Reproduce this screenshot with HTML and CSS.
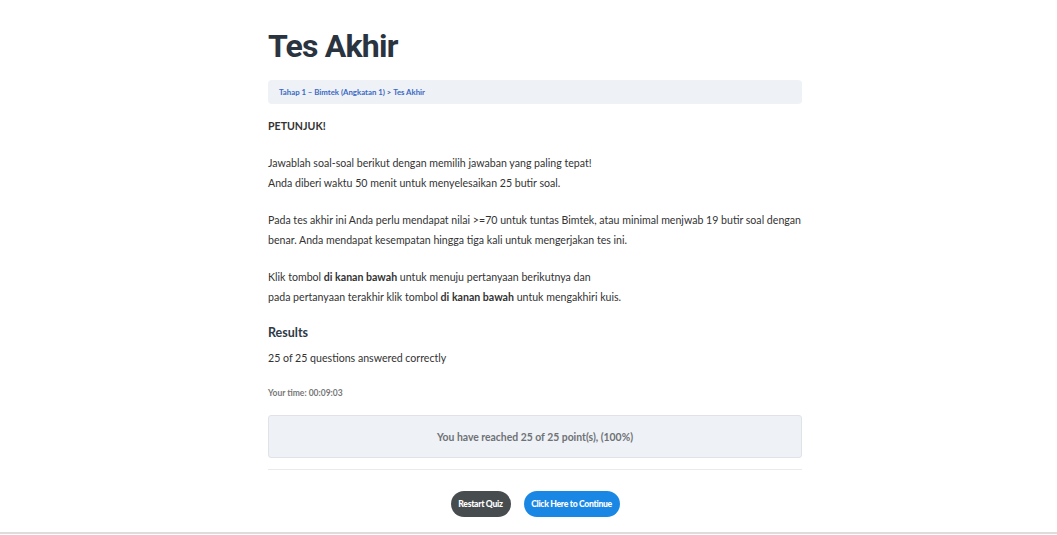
FILE: index.html
```html
<!DOCTYPE html>
<html lang="id">
<head>
<meta charset="utf-8">
<title>Tes Akhir</title>
<link rel="stylesheet" href="styles.css">
</head>
<body>
<div class="page">
  <main class="content">
    <h1 class="title">Tes Akhir</h1>
    <nav class="breadcrumb"><a href="#">Tahap 1 – Bimtek (Angkatan 1)</a> &gt; <a href="#">Tes Akhir</a></nav>
    <p class="strong-line">PETUNJUK!</p>
    <p class="text">Jawablah soal-soal berikut dengan memilih jawaban yang paling tepat!<br>Anda diberi waktu 50 menit untuk menyelesaikan 25 butir soal.</p>
    <p class="text">Pada tes akhir ini Anda perlu mendapat nilai &gt;=70 untuk tuntas Bimtek, atau minimal menjwab 19 butir soal dengan benar. Anda mendapat kesempatan hingga tiga kali untuk mengerjakan tes ini.</p>
    <p class="text">Klik tombol <b>di kanan bawah</b> untuk menuju pertanyaan berikutnya dan<br>pada pertanyaan terakhir klik tombol <b>di kanan bawah</b> untuk mengakhiri kuis.</p>
    <h4 class="results-title">Results</h4>
    <p class="answered">25 of 25 questions answered correctly</p>
    <p class="time">Your time: 00:09:03</p>
    <div class="points">You have reached 25 of 25 point(s), (100%)</div>
    <hr class="divider">
    <div class="actions">
      <button class="btn btn-dark">Restart Quiz</button>
      <button class="btn btn-blue">Click Here to Continue</button>
    </div>
  </main>
</div>
<div class="footer-line"></div>
</body>
</html>
```
FILE: styles.css
```css
html, body {
  margin: 0;
  padding: 0;
  background: #ffffff;
}
body {
  font-family: Lato, "Open Sans", sans-serif;
  color: #333333;
}
.page {
  display: flex;
  padding-left: 13px;
  height: 532px;
}
.content {
  width: 534px;
  margin: 0 auto;
}
.title {
  font-family: Roboto, sans-serif;
  font-weight: 700;
  font-size: 32px;
  letter-spacing: -0.8px;
  line-height: 40px;
  color: #2a3440;
  margin: 26px 0 14px;
}
.breadcrumb {
  background: #eef1f5;
  border-radius: 4px;
  height: 24px;
  padding: 0 11px;
  display: flex;
  align-items: center;
  font-size: 7.8px;
  font-weight: 700;
  color: #3b5a95;
  white-space: pre;
}
.breadcrumb a {
  color: #3a69c4;
  text-decoration: none;
}
.strong-line {
  font-size: 10.6px;
  font-weight: 700;
  margin: 14px 0 19px;
  line-height: 16px;
}
.text {
  font-size: 10.6px;
  line-height: 20px;
  margin: 0 0 17px;
}
.text b {
  font-weight: 700;
}
.results-title {
  font-size: 12.5px;
  font-weight: 700;
  margin: -1px 0 7px;
  line-height: 20px;
  color: #2e3a46;
}
.answered {
  font-size: 10.6px;
  line-height: 16px;
  margin: 0 0 21px;
}
.time {
  font-size: 8.5px;
  font-weight: 700;
  color: #777777;
  margin: 0 0 16px;
  line-height: 12px;
}
.points {
  background: #eef1f5;
  border: 1px solid #dfe3e8;
  border-radius: 3px;
  height: 41px;
  display: flex;
  align-items: center;
  justify-content: center;
  font-size: 10.4px;
  font-weight: 700;
  color: #6e7175;
}
.divider {
  border: 0;
  border-top: 1px solid #eaeaea;
  margin: 11px 0 21px;
}
.actions {
  display: flex;
  justify-content: center;
  gap: 13px;
}
.btn {
  border: 0;
  border-radius: 13px;
  height: 26px;
  padding: 0 4px;
  font-family: Lato, sans-serif;
  font-weight: 900;
  font-size: 8.6px;
  color: #ffffff;
  letter-spacing: -0.3px;
}
.btn-dark {
  background: #474d4f;
  width: 60px;
}
.btn-blue {
  background: #1b87e5;
  width: 96px;
}
.footer-line {
  border-top: 2px solid #dddddd;
}
```
